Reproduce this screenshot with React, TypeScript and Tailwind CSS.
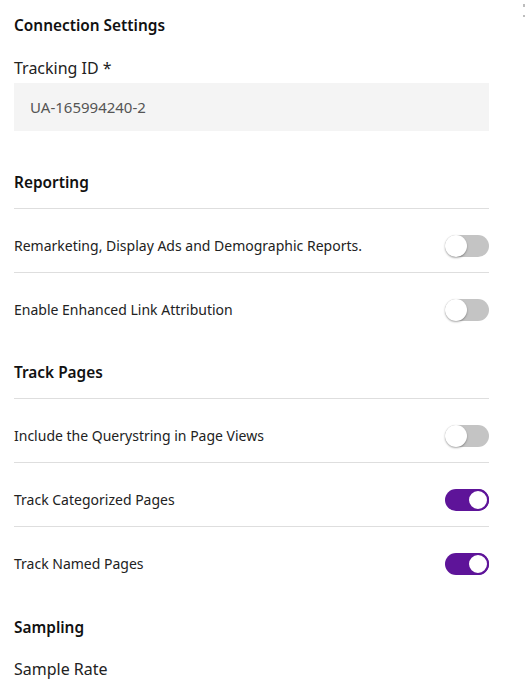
import { useState } from 'react'

interface ToggleRow {
  label: string
  on: boolean
}

interface Section {
  title: string
  rows: ToggleRow[]
}

const sections: Section[] = [
  {
    title: 'Reporting',
    rows: [
      { label: 'Remarketing, Display Ads and Demographic Reports.', on: false },
      { label: 'Enable Enhanced Link Attribution', on: false },
    ],
  },
  {
    title: 'Track Pages',
    rows: [
      { label: 'Include the Querystring in Page Views', on: false },
      { label: 'Track Categorized Pages', on: true },
      { label: 'Track Named Pages', on: true },
    ],
  },
]

function Toggle({ initial }: { initial: boolean }) {
  const [on, setOn] = useState(initial)
  return (
    <button
      onClick={() => setOn(!on)}
      className={`relative w-[44px] h-[22px] rounded-full flex-shrink-0 ${on ? 'bg-[#5e1499]' : 'bg-[#c4c4c4]'}`}
    >
      <span
        className={`absolute top-0 w-[22px] h-[22px] rounded-full bg-white ${
          on ? 'right-0 border-2 border-[#5e1499]' : 'left-0 shadow-[0_1px_2px_rgba(0,0,0,0.35)]'
        }`}
      />
    </button>
  )
}

export default function App() {
  return (
    <div className="relative min-h-screen bg-white text-[#1d1d1d] font-['Noto_Sans',sans-serif]">
      {/* scrollbar remnant top right */}
      <div className="absolute right-[1px] top-[4px] flex flex-col gap-[8px]">
        <span className="block w-[2px] h-[3px] bg-[#bdbdbd]" />
        <span className="block w-[2px] h-[2px] bg-[#bdbdbd]" />
      </div>

      <div className="pl-[14px] pr-[37px] pt-[14px] pb-6">
        <h2 className="text-[15.4px] leading-6 font-semibold text-[#111]">Connection Settings</h2>
        <label className="block mt-[18px] text-[16px] leading-6 text-[#222]">Tracking ID *</label>
        <div className="mt-[3px] h-[48px] bg-[#f4f4f4] flex items-center px-4 text-[15px] text-[#555]">
          UA-165994240-2
        </div>

        {sections.map((section, i) => (
          <div key={section.title} className={i === 0 ? 'mt-[40px]' : 'mt-[25px]'}>
            <h2 className="text-[15.4px] leading-6 font-semibold text-[#111]">{section.title}</h2>
            <div className="mt-[13px] border-t border-[#dedede]">
              {section.rows.map((row, j) => (
                <div
                  key={row.label}
                  className={`flex items-center justify-between pt-[26px] pb-[15px] ${
                    j < section.rows.length - 1 ? 'border-b border-[#dedede]' : ''
                  }`}
                >
                  <span className="text-[14px] leading-[22px] text-[#222]">{row.label}</span>
                  <Toggle initial={row.on} />
                </div>
              ))}
            </div>
          </div>
        ))}

        <div className="mt-[26px]">
          <h2 className="text-[15.4px] leading-6 font-semibold text-[#111]">Sampling</h2>
          <label className="block mt-[17px] text-[16px] leading-6 text-[#222]">Sample Rate</label>
        </div>
      </div>
    </div>
  )
}
